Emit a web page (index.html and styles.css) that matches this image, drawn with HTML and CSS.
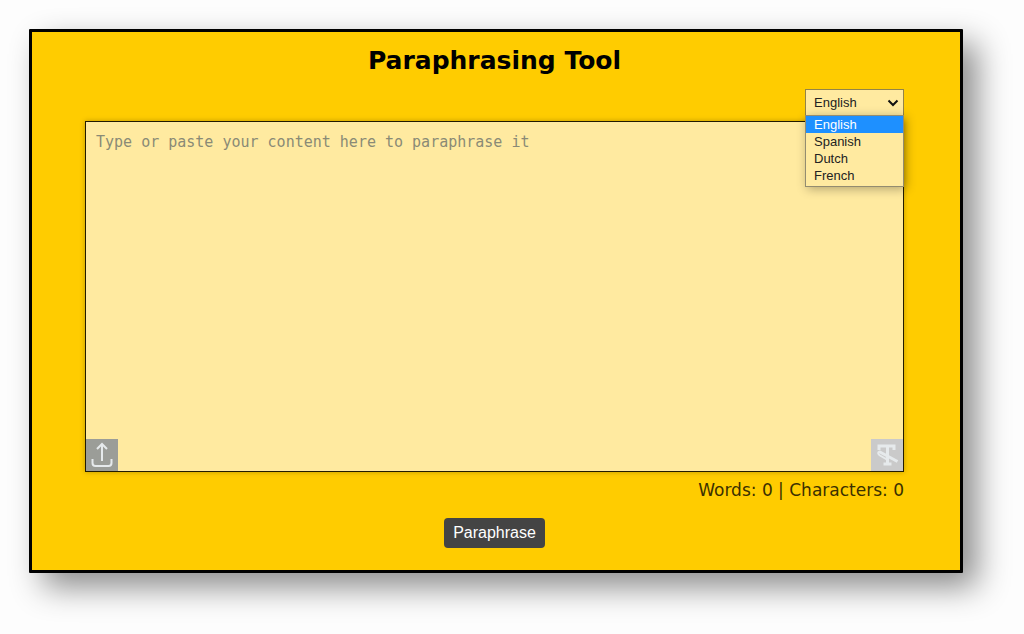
FILE: index.html
```html
<!DOCTYPE html>
<html lang="en">
<head>
<meta charset="utf-8">
<meta name="viewport" content="width=device-width, initial-scale=1">
<title>Paraphrasing Tool</title>
<link rel="stylesheet" href="styles.css">
</head>
<body>
<main class="card">
  <h1 class="title">Paraphrasing Tool</h1>
  <div class="toolbar">
    <div class="language">
      <select class="language-select" aria-label="Language">
        <option selected>English</option>
        <option>Spanish</option>
        <option>Dutch</option>
        <option>French</option>
      </select>
      <svg class="chevron" viewBox="0 0 12 8" aria-hidden="true"><path d="M1.5 1.5 6 6l4.500-4.500"/></svg>
      <ul class="language-menu" role="listbox" aria-label="Languages">
        <li class="menu-item menu-item-active" role="option" aria-selected="true">English</li>
        <li class="menu-item" role="option">Spanish</li>
        <li class="menu-item" role="option">Dutch</li>
        <li class="menu-item" role="option">French</li>
      </ul>
    </div>
  </div>
  <div class="editor">
    <textarea class="editor-text" aria-label="Content" placeholder="Type or paste your content here to paraphrase it"></textarea>
    <button class="corner-button upload" type="button" aria-label="Upload file">
      <svg class="icon" viewBox="0 0 32 32" aria-hidden="true"><path d="M16 22V5M11 10l5-5 5 5M6.500 20v4q0 3 3 3h13q3 0 3-3v-4"/></svg>
    </button>
    <button class="corner-button clear" type="button" aria-label="Clear text">
      <svg class="icon" viewBox="0 0 32 32" aria-hidden="true"><path d="M8 11V7h15v4M16.500 7v17M12.500 25h8"/><path d="M8 12.500 26.500 22.500"/><path class="icon-thin" d="M8 12.500q-2 2 1 4l6 3.500 2-3"/></svg>
    </button>
  </div>
  <p class="counts">Words: 0 | Characters: 0</p>
  <div class="actions"><button class="submit" type="button">Paraphrase</button></div>
</main>
</body>
</html>
```
FILE: styles.css
```css
* {
  box-sizing: border-box;
}

body {
  margin: 0;
  padding: 29px 61px 61px 29px;
  background: #fdfdfd;
  font-family: "DejaVu Sans", sans-serif;
  color: #000;
}

.card {
  padding: 13px 56px 22px 53px;
  border: 3px solid #000;
  border-radius: 1px;
  background: #fc0;
  box-shadow: 14px 14px 32px rgba(0, 0, 0, 0.45);
}

.title {
  margin: 0;
  font-size: 25px;
  line-height: 32px;
  text-align: center;
}

.toolbar {
  display: flex;
  justify-content: flex-end;
  padding: 12px 0 5px;
}

.language {
  position: relative;
  width: 99px;
  font: 13px/17px "Liberation Sans", Arial, sans-serif;
}

.language-select {
  display: block;
  width: 100%;
  height: 27px;
  padding: 0 8px 1px;
  border: 1px solid #938448;
  border-radius: 0;
  background: #ffeaa0;
  color: #222;
  font: inherit;
  appearance: none;
}

.chevron {
  position: absolute;
  top: 10px;
  right: 5px;
  width: 12px;
  height: 8px;
  fill: none;
  stroke: #111;
  stroke-width: 2;
  pointer-events: none;
}

.language-menu {
  position: absolute;
  z-index: 2;
  top: 26px;
  left: 0;
  width: 100%;
  margin: 0;
  padding: 0 0 2px;
  border: 1px solid #938c70;
  background: #ffeaa0;
  box-shadow: 2px 2px 10px rgba(0, 0, 0, 0.3);
  list-style: none;
}

.menu-item {
  padding: 0 8px;
  color: #222;
}

.menu-item-active {
  background: #1e90ff;
  color: #fff;
}

.editor {
  position: relative;
  border: 1px solid #221b00;
  box-shadow: 0 0 5px rgba(0, 0, 0, 0.25);
}

.editor-text {
  display: block;
  width: 100%;
  height: 349px;
  padding: 10px;
  border: 0;
  background: #ffeaa0;
  color: #222;
  font: 15px/20px "DejaVu Sans Mono", monospace;
  resize: none;
}

.editor-text::placeholder {
  color: #8a8a76;
}

.corner-button {
  position: absolute;
  bottom: 0;
  width: 32px;
  height: 32px;
  padding: 0;
  border: 0;
}

.upload {
  left: 0;
  background: #9b9d98;
}

.clear {
  right: 0;
  background: #cacaca;
}

.icon {
  display: block;
  width: 32px;
  height: 32px;
  fill: none;
  stroke: #e6eaec;
  stroke-width: 2;
}

.clear .icon {
  stroke-width: 3;
}

.clear .icon-thin {
  stroke-width: 2;
}

.counts {
  margin: 6px 0 0;
  color: #3b3000;
  font-size: 17px;
  line-height: 24px;
  text-align: right;
}

.actions {
  display: flex;
  justify-content: center;
  padding-top: 16px;
}

.submit {
  height: 30px;
  padding: 0 9px;
  border: 0;
  border-radius: 4px;
  background: #444;
  color: #fff;
  font: 16px/30px "Liberation Sans", Arial, sans-serif;
}
```
